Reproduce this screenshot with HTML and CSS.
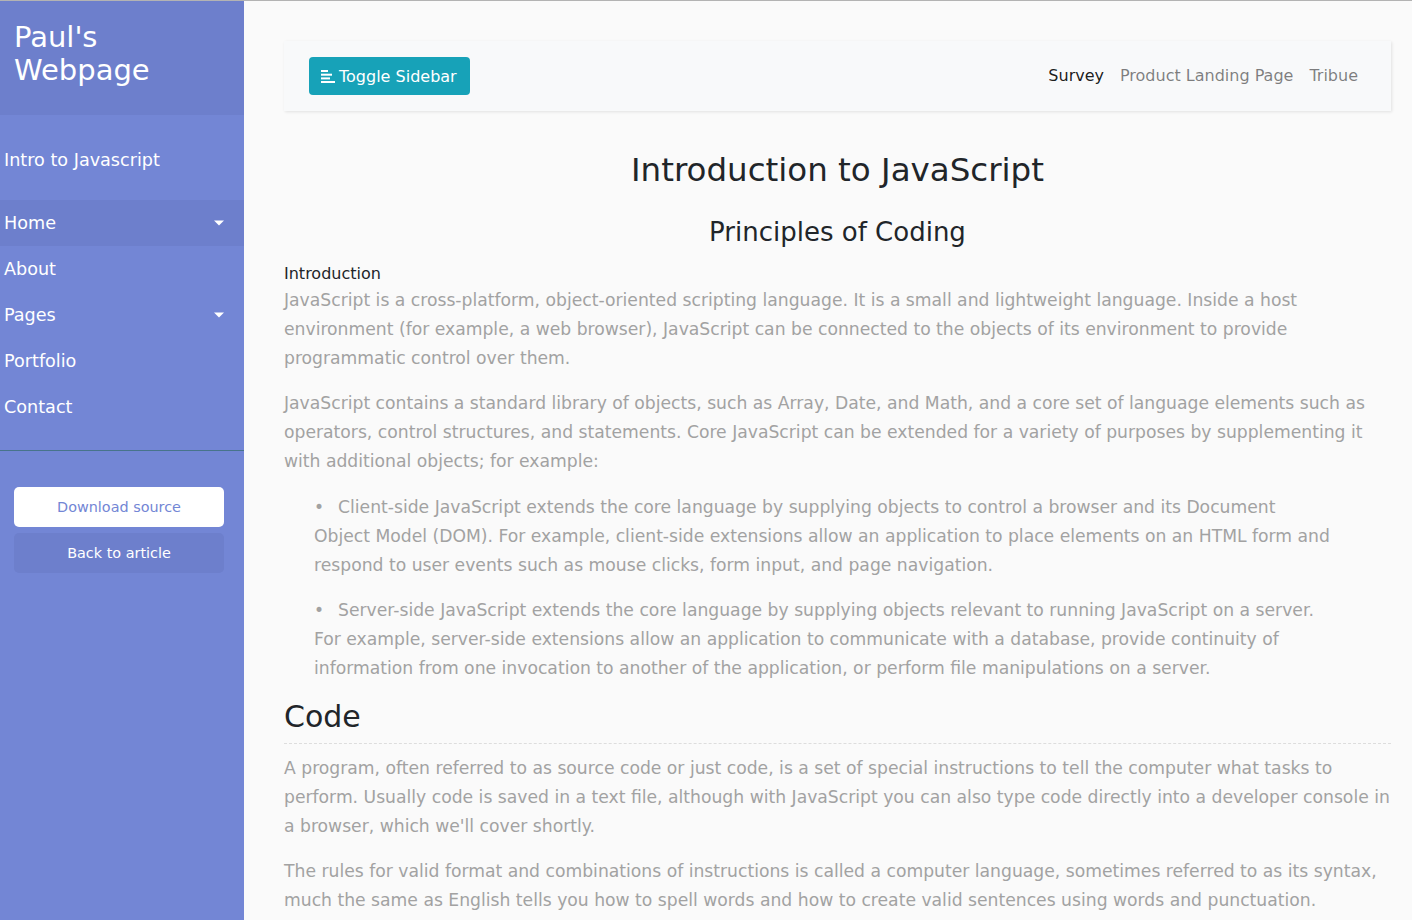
FILE: index.html
```html
<!DOCTYPE html>
<html lang="en">
<head>
<meta charset="utf-8">
<title>Paul's Webpage</title>
<link rel="stylesheet" href="styles.css">
</head>
<body>
<div class="wrapper">
  <nav class="sidebar">
    <div class="sidebar-header">
      <h3>Paul's Webpage</h3>
    </div>
    <ul class="components">
      <li class="menu-title">Intro to Javascript</li>
      <li class="active"><a href="#" class="dropdown-toggle">Home</a></li>
      <li><a href="#">About</a></li>
      <li><a href="#" class="dropdown-toggle">Pages</a></li>
      <li><a href="#">Portfolio</a></li>
      <li><a href="#">Contact</a></li>
    </ul>
    <ul class="ctas">
      <li><a href="#" class="download">Download source</a></li>
      <li><a href="#" class="article">Back to article</a></li>
    </ul>
  </nav>

  <main class="content">
    <nav class="topbar">
      <button type="button" class="toggle-btn">
        <svg class="toggle-icon" width="14" height="14" viewBox="0 0 14 14" aria-hidden="true">
          <rect x="0" y="1" width="7" height="2" fill="#fff"/>
          <rect x="0" y="4.7" width="11" height="2" fill="#fff"/>
          <rect x="0" y="8.4" width="9" height="2" fill="#fff"/>
          <rect x="0" y="12" width="14" height="2" fill="#fff"/>
        </svg>
        <span>Toggle Sidebar</span>
      </button>
      <ul class="top-links">
        <li><a href="#" class="current">Survey</a></li>
        <li><a href="#">Product Landing Page</a></li>
        <li><a href="#">Tribue</a></li>
      </ul>
    </nav>

    <article class="article-body">
      <h2 class="page-title">Introduction to JavaScript</h2>
      <h3 class="page-subtitle">Principles of Coding</h3>
      <div class="section-label">Introduction</div>
      <p>JavaScript is a cross-platform, object-oriented scripting language. It is a small and lightweight language. Inside a host environment (for example, a web browser), JavaScript can be connected to the objects of its environment to provide programmatic control over them.</p>
      <p>JavaScript contains a standard library of objects, such as Array, Date, and Math, and a core set of language elements such as operators, control structures, and statements. Core JavaScript can be extended for a variety of purposes by supplementing it with additional objects; for example:</p>
      <ul class="bullets">
        <li>Client-side JavaScript extends the core language by supplying objects to control a browser and its Document Object Model (DOM). For example, client-side extensions allow an application to place elements on an HTML form and respond to user events such as mouse clicks, form input, and page navigation.</li>
        <li>Server-side JavaScript extends the core language by supplying objects relevant to running JavaScript on a server. For example, server-side extensions allow an application to communicate with a database, provide continuity of information from one invocation to another of the application, or perform file manipulations on a server.</li>
      </ul>
      <h2 class="section-title">Code</h2>
      <div class="line"></div>
      <p>A program, often referred to as source code or just code, is a set of special instructions to tell the computer what tasks to perform. Usually code is saved in a text file, although with JavaScript you can also type code directly into a developer console in a browser, which we'll cover shortly.</p>
      <p>The rules for valid format and combinations of instructions is called a computer language, sometimes referred to as its syntax, much the same as English tells you how to spell words and how to create valid sentences using words and punctuation.</p>
    </article>
  </main>
</div>
</body>
</html>
```
FILE: styles.css
```css
* { box-sizing: border-box; }

html, body {
  margin: 0;
  padding: 0;
  height: 100%;
}

body {
  font-family: "DejaVu Sans", "Liberation Sans", sans-serif;
  background: #fafafa;
  color: #212529;
  border-top: 1px solid #b3b3b3;
  overflow: hidden;
}

a { text-decoration: none; color: inherit; }

.wrapper {
  display: flex;
  align-items: stretch;
  min-height: 100%;
}

/* ---------- Sidebar ---------- */
.sidebar {
  width: 250px;
  flex-shrink: 0;
  margin-left: -6px;
  background: #7386d5;
  color: #fff;
  min-height: 100vh;
}

.sidebar-header {
  background: #6d7fcc;
  padding: 20px;
}

.sidebar-header h3 {
  margin: 0 0 8px;
  font-size: 29px;
  line-height: 33px;
  font-weight: 400;
}

.components {
  list-style: none;
  margin: 0 0 16px;
  padding: 20px 0;
  border-bottom: 1px solid #47748b;
}

.components .menu-title {
  padding: 10px;
  margin-bottom: 15px;
  font-size: 17.6px;
  line-height: 30px;
  font-weight: 400;
}

.components li a {
  display: block;
  position: relative;
  padding: 10px;
  font-size: 17.6px;
  line-height: 26px;
}

.components li.active > a {
  background: #6d7fcc;
}

.dropdown-toggle::after {
  content: "";
  position: absolute;
  right: 20px;
  top: 50%;
  transform: translateY(-50%);
  border-top: 5.3px solid #fff;
  border-left: 5.3px solid transparent;
  border-right: 5.3px solid transparent;
}

.ctas {
  list-style: none;
  margin: 0;
  padding: 20px;
}

.ctas a {
  display: block;
  text-align: center;
  font-size: 14.4px;
  line-height: 20px;
  padding: 10px;
  border-radius: 5px;
  margin-bottom: 6px;
}

.ctas a.download {
  background: #fff;
  color: #7386d5;
}

.ctas a.article {
  background: #6d7fcc;
  color: #fff;
}

/* ---------- Content ---------- */
.content {
  flex: 1;
  min-width: 0;
  padding: 40px 21px 0 40px;
}

.topbar {
  display: flex;
  align-items: center;
  justify-content: space-between;
  background: #f8f9fa;
  padding: 15px 25px;
  box-shadow: 1px 1px 3px rgba(0, 0, 0, 0.1);
  margin-bottom: 40px;
}

.toggle-btn {
  display: flex;
  align-items: center;
  gap: 4px;
  height: 38px;
  padding: 0 13px 0 12px;
  border: none;
  border-radius: 4px;
  background: #17a2b8;
  color: #fff;
  font-family: inherit;
  font-size: 16px;
  cursor: pointer;
}

.toggle-icon { display: block; }

.top-links {
  display: flex;
  list-style: none;
  margin: 0;
  padding: 0;
}

.top-links a {
  display: block;
  padding: 8px;
  font-size: 16px;
  line-height: 24px;
  color: rgba(0, 0, 0, 0.5);
}

.top-links a.current {
  color: rgba(0, 0, 0, 0.9);
}

.article-body p {
  margin: 0 0 16px;
  font-size: 17.2px;
  line-height: 29px;
  font-weight: 400;
  color: #a2a2a2;
}

.page-title {
  text-align: center;
  margin: 2px 0 0;
  font-size: 32.5px;
  line-height: 39px;
  font-weight: 400;
}

.page-subtitle {
  text-align: center;
  margin: 25px 0 0;
  font-size: 26px;
  line-height: 34px;
  font-weight: 400;
}

.section-label {
  margin-top: 13px;
  font-size: 16px;
  line-height: 24px;
}

.bullets {
  list-style: none;
  margin: 0 0 15px;
  padding: 1px 57px 0 30px;
  font-size: 17.2px;
  line-height: 29px;
  font-weight: 400;
  color: #a2a2a2;
}

.bullets li + li { margin-top: 16px; }

.bullets li::before {
  content: "\2022";
  display: inline-block;
  width: 24px;
  padding-left: 0;
  font-size: 17px;
}

.section-title {
  margin: 0 0 7px;
  font-size: 30px;
  line-height: 38px;
  font-weight: 400;
}

.line {
  height: 1px;
  border-bottom: 1px dashed #ddd;
  margin-bottom: 10px;
}
```
